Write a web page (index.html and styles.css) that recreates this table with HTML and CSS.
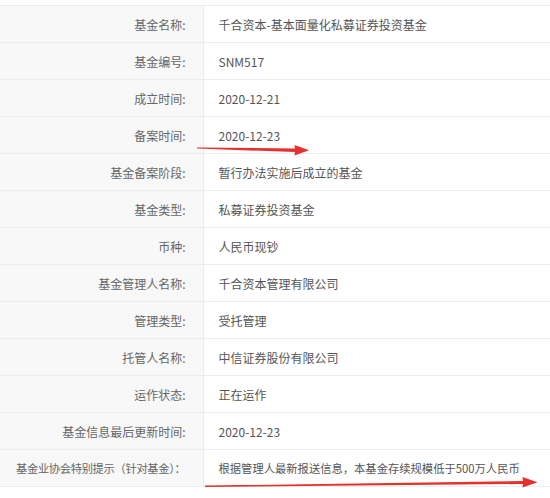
FILE: index.html
```html
<!DOCTYPE html>
<html lang="zh-CN">
<head>
    <meta charset="UTF-8">
    <meta name="viewport" content="width=device-width, initial-scale=1.0">
    <link rel="stylesheet" href="styles.css">
    <title>基金信息</title>
</head>
<body>
    <div class="page">
        <table class="fund-info">
            <tr><th>基金名称:</th><td>千合资本-基本面量化私募证券投资基金</td></tr>
            <tr><th>基金编号:</th><td>SNM517</td></tr>
            <tr><th>成立时间:</th><td>2020-12-21</td></tr>
            <tr><th>备案时间:</th><td>2020-12-23</td></tr>
            <tr><th>基金备案阶段:</th><td>暂行办法实施后成立的基金</td></tr>
            <tr><th>基金类型:</th><td>私募证券投资基金</td></tr>
            <tr><th>币种:</th><td>人民币现钞</td></tr>
            <tr><th>基金管理人名称:</th><td>千合资本管理有限公司</td></tr>
            <tr><th>管理类型:</th><td>受托管理</td></tr>
            <tr><th>托管人名称:</th><td>中信证券股份有限公司</td></tr>
            <tr><th>运作状态:</th><td>正在运作</td></tr>
            <tr><th>基金信息最后更新时间:</th><td>2020-12-23</td></tr>
            <tr class="note"><th>基金业协会特别提示（针对基金）：</th><td>根据管理人最新报送信息，本基金存续规模低于500万人民币</td></tr>
        </table>

        <!-- red marker arrows drawn over the table -->
        <svg class="marks" width="550" height="498" viewBox="0 0 550 498">
            <polygon points="197,147.4 295,148.6 294.5,145 309,150.3 294.5,155.5 295,152 197,148.6" />
            <polygon points="205,485.6 523,481 522.5,477 537.5,482.2 522.5,487.5 523,484 205,487" />
        </svg>
    </div>
</body>
</html>
```
FILE: styles.css
```css
* {
    margin: 0;
    padding: 0;
    box-sizing: border-box;
}

body {
    font-family: "Noto Sans CJK SC", "Noto Sans", sans-serif;
    background-color: #fff;
    color: #555;
}

.page {
    position: relative;
    width: 550px;
    height: 498px;
    padding-top: 5px;
    overflow: hidden;
}

.fund-info {
    width: 550px;
    table-layout: fixed;
    border-collapse: collapse;
    font-size: 12px;
}

.fund-info tr {
    height: 37px;
    border-top: 1px solid #ececec;
    border-bottom: 1px solid #ececec;
}

.fund-info th {
    width: 203px;
    padding-right: 17px;
    text-align: right;
    font-weight: normal;
    color: #666;
    background-color: #f8f8f8;
    border-right: 1px solid #ececec;
    white-space: nowrap;
}

.fund-info td {
    padding-left: 15px;
    text-align: left;
    color: #555;
    white-space: nowrap;
}

/* last row is squeezed a little to fit */
.fund-info .note {
    font-size: 11.3px;
}

.fund-info .note th {
    letter-spacing: -0.35px;
}

.marks {
    position: absolute;
    top: 0;
    left: 0;
    pointer-events: none;
}

.marks polygon {
    fill: #e6302c;
}
```
